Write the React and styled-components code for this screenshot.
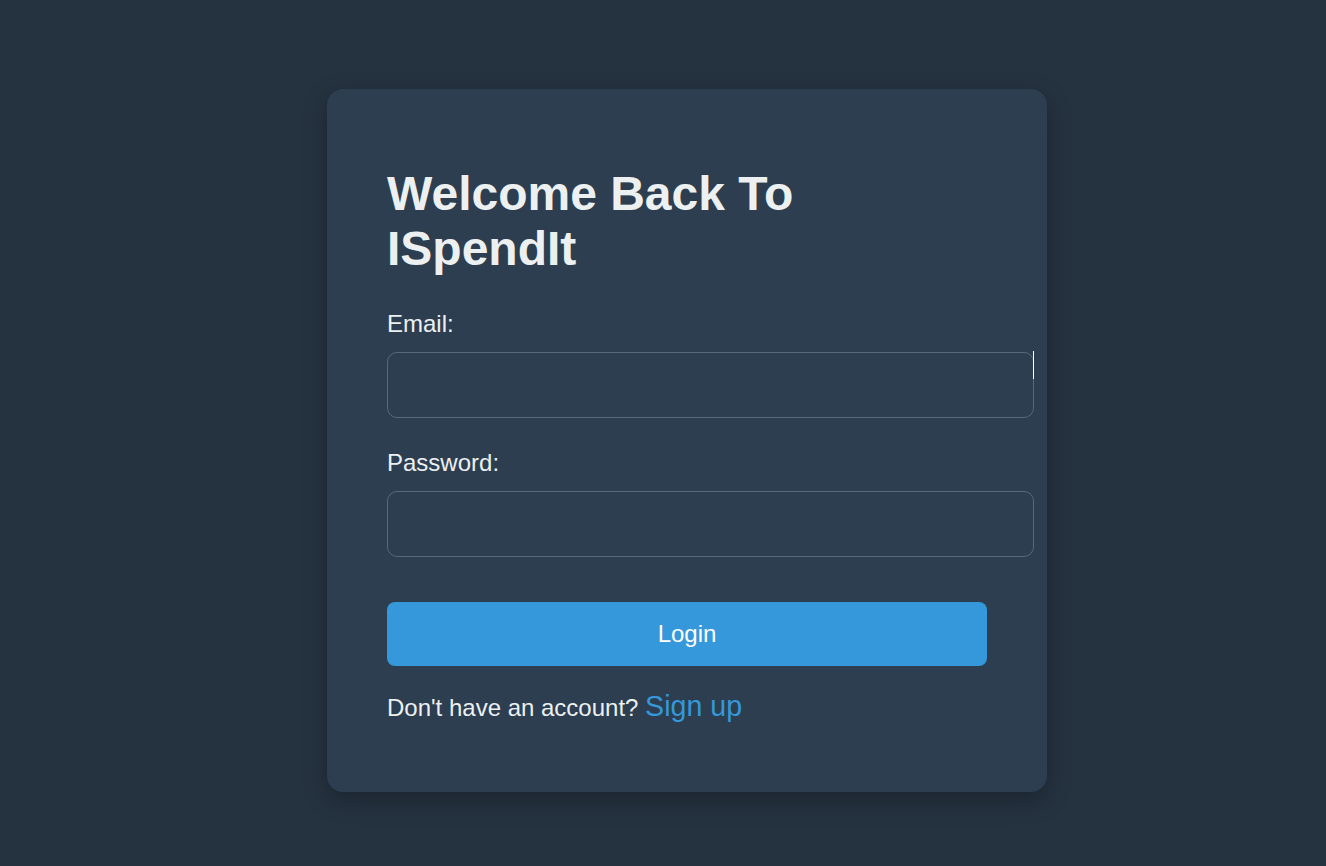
import React, { useState } from "react";
import styled, { createGlobalStyle } from "styled-components";

const GlobalStyle = createGlobalStyle`
  html, body {
    margin: 0;
    padding: 0;
    background-color: #253240;
    font-family: "Liberation Sans", Arial, sans-serif;
  }
`;

const Page = styled.div`
  display: flex;
  align-items: flex-start;
  min-height: 866px;
  box-sizing: border-box;
  padding: 89px 0 0 327px;
`;

const Card = styled.form`
  display: flex;
  flex-direction: column;
  width: 600px;
  padding: 77px 60px 69px;
  background-color: #2c3e50;
  border-radius: 16px;
  box-shadow: 0 8px 24px rgba(0, 0, 0, 0.25);
  color: #ecf0f1;
`;

const Title = styled.h1`
  margin: 0 0 34px;
  font-size: 48px;
  font-weight: bold;
  color: #ecf0f1;
  width: 600px;
`;

const Field = styled.div`
  position: relative;
  display: flex;
  flex-direction: column;
  margin-top: ${(p) => (p.first ? "0" : "31px")};
  &.marked::after {
    content: "";
    position: absolute;
    right: -47px;
    top: 41px;
    width: 1.5px;
    height: 28px;
    background: #ffffff;
  }
`;

const Label = styled.label`
  display: block;
  font-size: 24px;
  margin-bottom: 14px;
  color: #ecf0f1;
`;

const Input = styled.input`
  box-sizing: content-box;
  width: 100%;
  height: 64px;
  padding: 0 22px 0 23px;
  border: 1px solid #5b6878;
  border-radius: 10px;
  background-color: #2c3e50;
  color: #ecf0f1;
  font-size: 20px;
  font-family: inherit;
  outline: none;
`;

const LoginButton = styled.button`
  margin-top: 45px;
  height: 64px;
  width: 100%;
  border: none;
  border-radius: 8px;
  background-color: #3498db;
  color: #ffffff;
  font-size: 24px;
  font-family: inherit;
  cursor: pointer;
`;

const Footer = styled.p`
  margin: 24px 0 0;
  font-size: 24px;
  color: #ecf0f1;
`;

const SignUp = styled.a`
  font-size: 28.6px;
  color: #3498db;
  text-decoration: none;
  cursor: pointer;
`;

function App() {
  const [email, setEmail] = useState("");
  const [password, setPassword] = useState("");

  return (
    <>
      <GlobalStyle />
      <Page>
        <Card onSubmit={(e) => e.preventDefault()}>
          <Title>Welcome Back To ISpendIt</Title>
          <Field first className="marked">
            <Label htmlFor="email">Email:</Label>
            <Input
              id="email"
              type="email"
              value={email}
              onChange={(e) => setEmail(e.target.value)}
            />
          </Field>
          <Field>
            <Label htmlFor="password">Password:</Label>
            <Input
              id="password"
              type="password"
              value={password}
              onChange={(e) => setPassword(e.target.value)}
            />
          </Field>
          <LoginButton type="submit">Login</LoginButton>
          <Footer>
            Don't have an account? <SignUp>Sign up</SignUp>
          </Footer>
        </Card>
      </Page>
    </>
  );
}

export default App;
